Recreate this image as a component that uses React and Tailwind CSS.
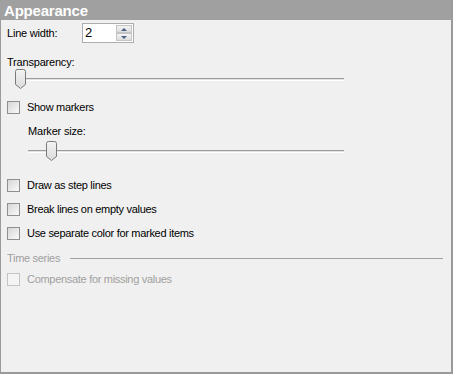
import React from 'react';

const font = { fontFamily: '"Liberation Sans", Arial, sans-serif' };

const Checkbox = ({ label, disabled }) => (
  <div className="flex items-center h-[13px] pl-[6px]">
    <div
      className={`w-[13px] h-[13px] border ${
        disabled
          ? 'border-[#c4c4c4] bg-[#f4f4f4]'
          : 'border-[#8e8f8f] bg-gradient-to-br from-[#d6d6d6] to-[#fafafa]'
      }`}
    />
    <span className={`ml-[7px] text-[11px] leading-[13px] tracking-[-0.3px] ${disabled ? 'text-[#a0a0a0]' : 'text-black'}`}>
      {label}
    </span>
  </div>
);

const Thumb = () => (
  <svg width="11" height="20" viewBox="0 0 11 20">
    <defs>
      <linearGradient id="tg" x1="0" y1="0" x2="0" y2="1">
        <stop offset="0" stopColor="#f4f4f4" />
        <stop offset="1" stopColor="#dadada" />
      </linearGradient>
    </defs>
    <path d="M0.5 2.5 Q0.5 0.5 2.5 0.5 H8.5 Q10.5 0.5 10.5 2.5 V15.5 L5.5 19.5 L0.5 15.5 Z" fill="url(#tg)" stroke="#7a7a7a" />
  </svg>
);

const Slider = ({ trackLeft, thumbLeft }) => (
  <div className="relative h-[21px]">
    <div
      className="absolute top-[9px] h-[3px] border-t border-[#9c9c9c] bg-[#e2e2e2] border-b border-b-white"
      style={{ left: trackLeft, width: 343 - trackLeft }}
    />
    <div className="absolute top-0" style={{ left: thumbLeft }}>
      <Thumb />
    </div>
  </div>
);

export default function App() {
  return (
    <div className="w-[453px] h-[374px] bg-[#f0f0f0] flex flex-col border-l border-r-2 border-b-2 border-[#9a9a9a]" style={font}>
      <div className="h-[20px] bg-[#a0a0a0] flex items-center pl-[4px] -ml-px">
        <span className="text-white font-bold text-[15px] leading-none tracking-[-0.2px]">Appearance</span>
      </div>

      <div className="mt-[3px] flex items-center h-[20px] pl-[6px]">
        <span className="text-[11px] w-[75px] tracking-[-0.2px]">Line width:</span>
        <div className="flex w-[52px] h-[20px] border border-[#abadb3] bg-white">
          <span className="text-[13px] leading-[18px] pl-[2px] flex-1">2</span>
          <div className="flex flex-col w-[16px] my-px mr-px">
            <div className="h-[8px] flex items-center justify-center border border-[#c4c4c4] bg-gradient-to-b from-[#f4f4f4] to-[#dcdcdc]">
              <div className="w-0 h-0 border-l-[3px] border-r-[3px] border-b-[3px] border-transparent border-b-[#4d6185]" />
            </div>
            <div className="h-[8px] flex items-center justify-center border border-[#c4c4c4] bg-gradient-to-b from-[#f4f4f4] to-[#dcdcdc]">
              <div className="w-0 h-0 border-l-[3px] border-r-[3px] border-t-[3px] border-transparent border-t-[#4d6185]" />
            </div>
          </div>
        </div>
      </div>

      <div className="mt-[12px] h-[14px] pl-[6px] text-[11px] leading-[14px] tracking-[-0.2px]">Transparency:</div>
      <Slider trackLeft={16} thumbLeft={14} />

      <div className="mt-[11px]">
        <Checkbox label="Show markers" />
      </div>

      <div className="mt-[10px] h-[14px] pl-[27px] text-[11px] leading-[14px] tracking-[-0.2px]">Marker size:</div>
      <div className="mt-[3px]">
        <Slider trackLeft={27} thumbLeft={45} />
      </div>

      <div className="mt-[17px]">
        <Checkbox label="Draw as step lines" />
      </div>
      <div className="mt-[11px]">
        <Checkbox label="Break lines on empty values" />
      </div>
      <div className="mt-[11px]">
        <Checkbox label="Use separate color for marked items" />
      </div>

      <div className="mt-[11px] h-[14px] flex items-center pl-[6px] pr-[8px]">
        <span className="text-[11px] text-[#a0a0a0] tracking-[-0.3px] w-[63px]">Time series</span>
        <div className="flex-1 h-px bg-[#a0a0a0]" />
      </div>

      <div className="mt-[8px]">
        <Checkbox label="Compensate for missing values" disabled />
      </div>
    </div>
  );
}
